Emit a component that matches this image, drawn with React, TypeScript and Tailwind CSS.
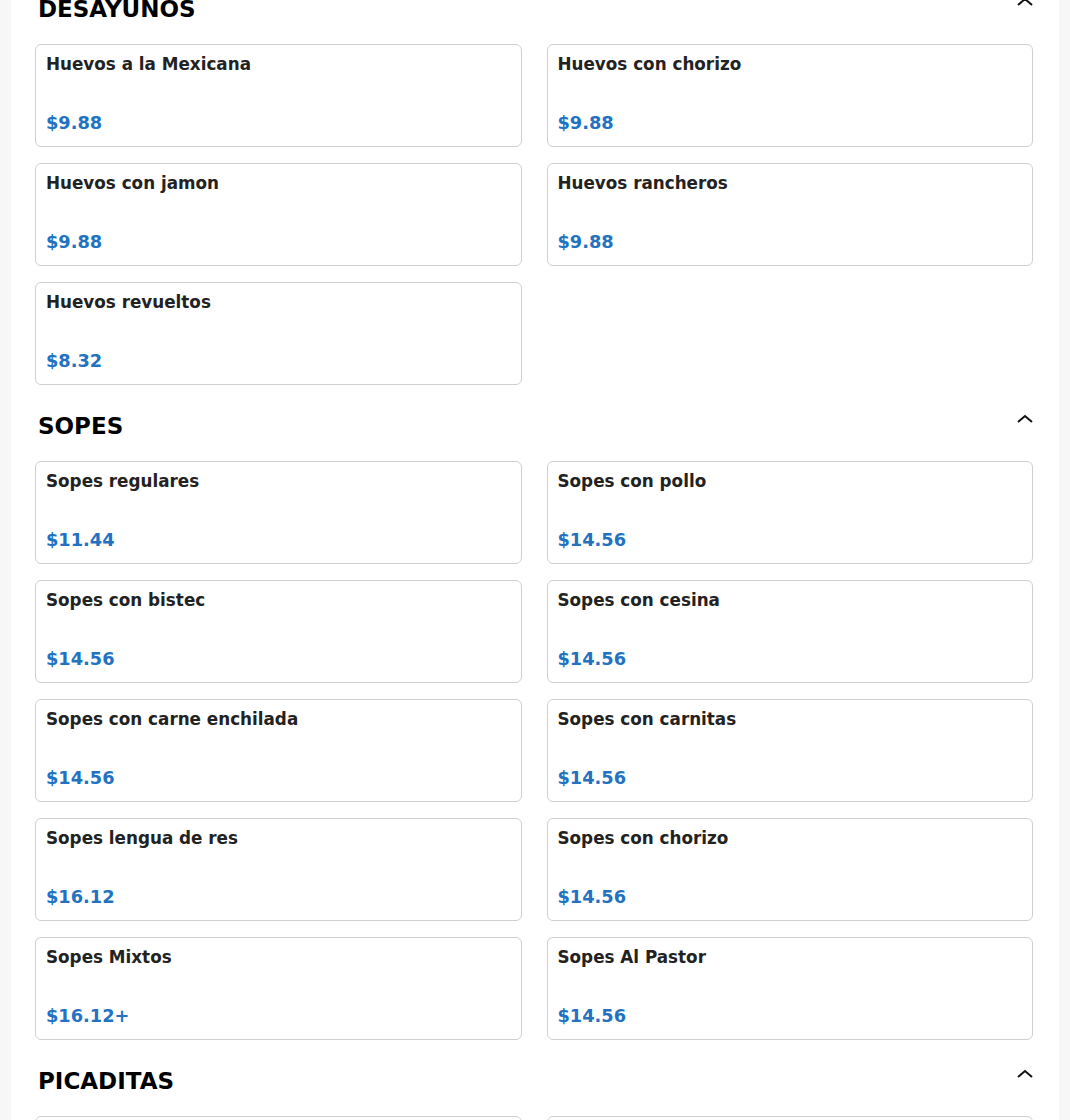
interface MenuItem {
    name: string;
    price: string;
}

interface MenuSection {
    title: string;
    items: MenuItem[];
}

const sections: MenuSection[] = [
    {
        title: 'DESAYUNOS',
        items: [
            { name: 'Huevos a la Mexicana', price: '$9.88' },
            { name: 'Huevos con chorizo', price: '$9.88' },
            { name: 'Huevos con jamon', price: '$9.88' },
            { name: 'Huevos rancheros', price: '$9.88' },
            { name: 'Huevos revueltos', price: '$8.32' },
        ],
    },
    {
        title: 'SOPES',
        items: [
            { name: 'Sopes regulares', price: '$11.44' },
            { name: 'Sopes con pollo', price: '$14.56' },
            { name: 'Sopes con bistec', price: '$14.56' },
            { name: 'Sopes con cesina', price: '$14.56' },
            { name: 'Sopes con carne enchilada', price: '$14.56' },
            { name: 'Sopes con carnitas', price: '$14.56' },
            { name: 'Sopes lengua de res', price: '$16.12' },
            { name: 'Sopes con chorizo', price: '$14.56' },
            { name: 'Sopes Mixtos', price: '$16.12+' },
            { name: 'Sopes Al Pastor', price: '$14.56' },
        ],
    },
    {
        title: 'PICADITAS',
        items: [
            { name: 'Picaditas regulares', price: '$11.44' },
            { name: 'Picaditas con pollo', price: '$14.56' },
        ],
    },
];

function Chevron() {
    return (
        <svg width="16" height="10" viewBox="0 0 16 10" className="mt-[1px] shrink-0">
            <polyline
                points="1,8 8,2 15,8"
                fill="none"
                stroke="#111"
                strokeWidth="2"
            />
        </svg>
    );
}

export default function App() {
    return (
        <div className="h-[1120px] overflow-hidden bg-[#f7f7f7] font-['DejaVu_Sans',sans-serif]">
            <div className="mx-[11px] -mt-[32px] bg-white pb-10">
                {sections.map((section) => (
                    <section key={section.title}>
                        {/* Section header */}
                        <div className="flex items-start justify-between pt-[28px] pr-[26px] pb-[21px] pl-[27px]">
                            <h2 className="text-[23px] leading-[27px] font-bold text-black">
                                {section.title}
                            </h2>
                            <Chevron />
                        </div>

                        {/* Items */}
                        <div className="grid grid-cols-2 gap-x-[25px] gap-y-4 pr-[26px] pl-6">
                            {section.items.map((item) => (
                                <div
                                    key={item.name}
                                    className="flex h-[103px] flex-col justify-between rounded-md border border-[#cfcfcf] bg-white pt-[9px] pr-[10px] pb-[13px] pl-[10px]"
                                >
                                    <h3 className="text-[16.8px] leading-[20px] font-bold text-[#222]">
                                        {item.name}
                                    </h3>
                                    <p className="text-[17.8px] leading-[20px] font-bold text-[#2372c2]">
                                        {item.price}
                                    </p>
                                </div>
                            ))}
                        </div>
                    </section>
                ))}
            </div>
        </div>
    );
}
